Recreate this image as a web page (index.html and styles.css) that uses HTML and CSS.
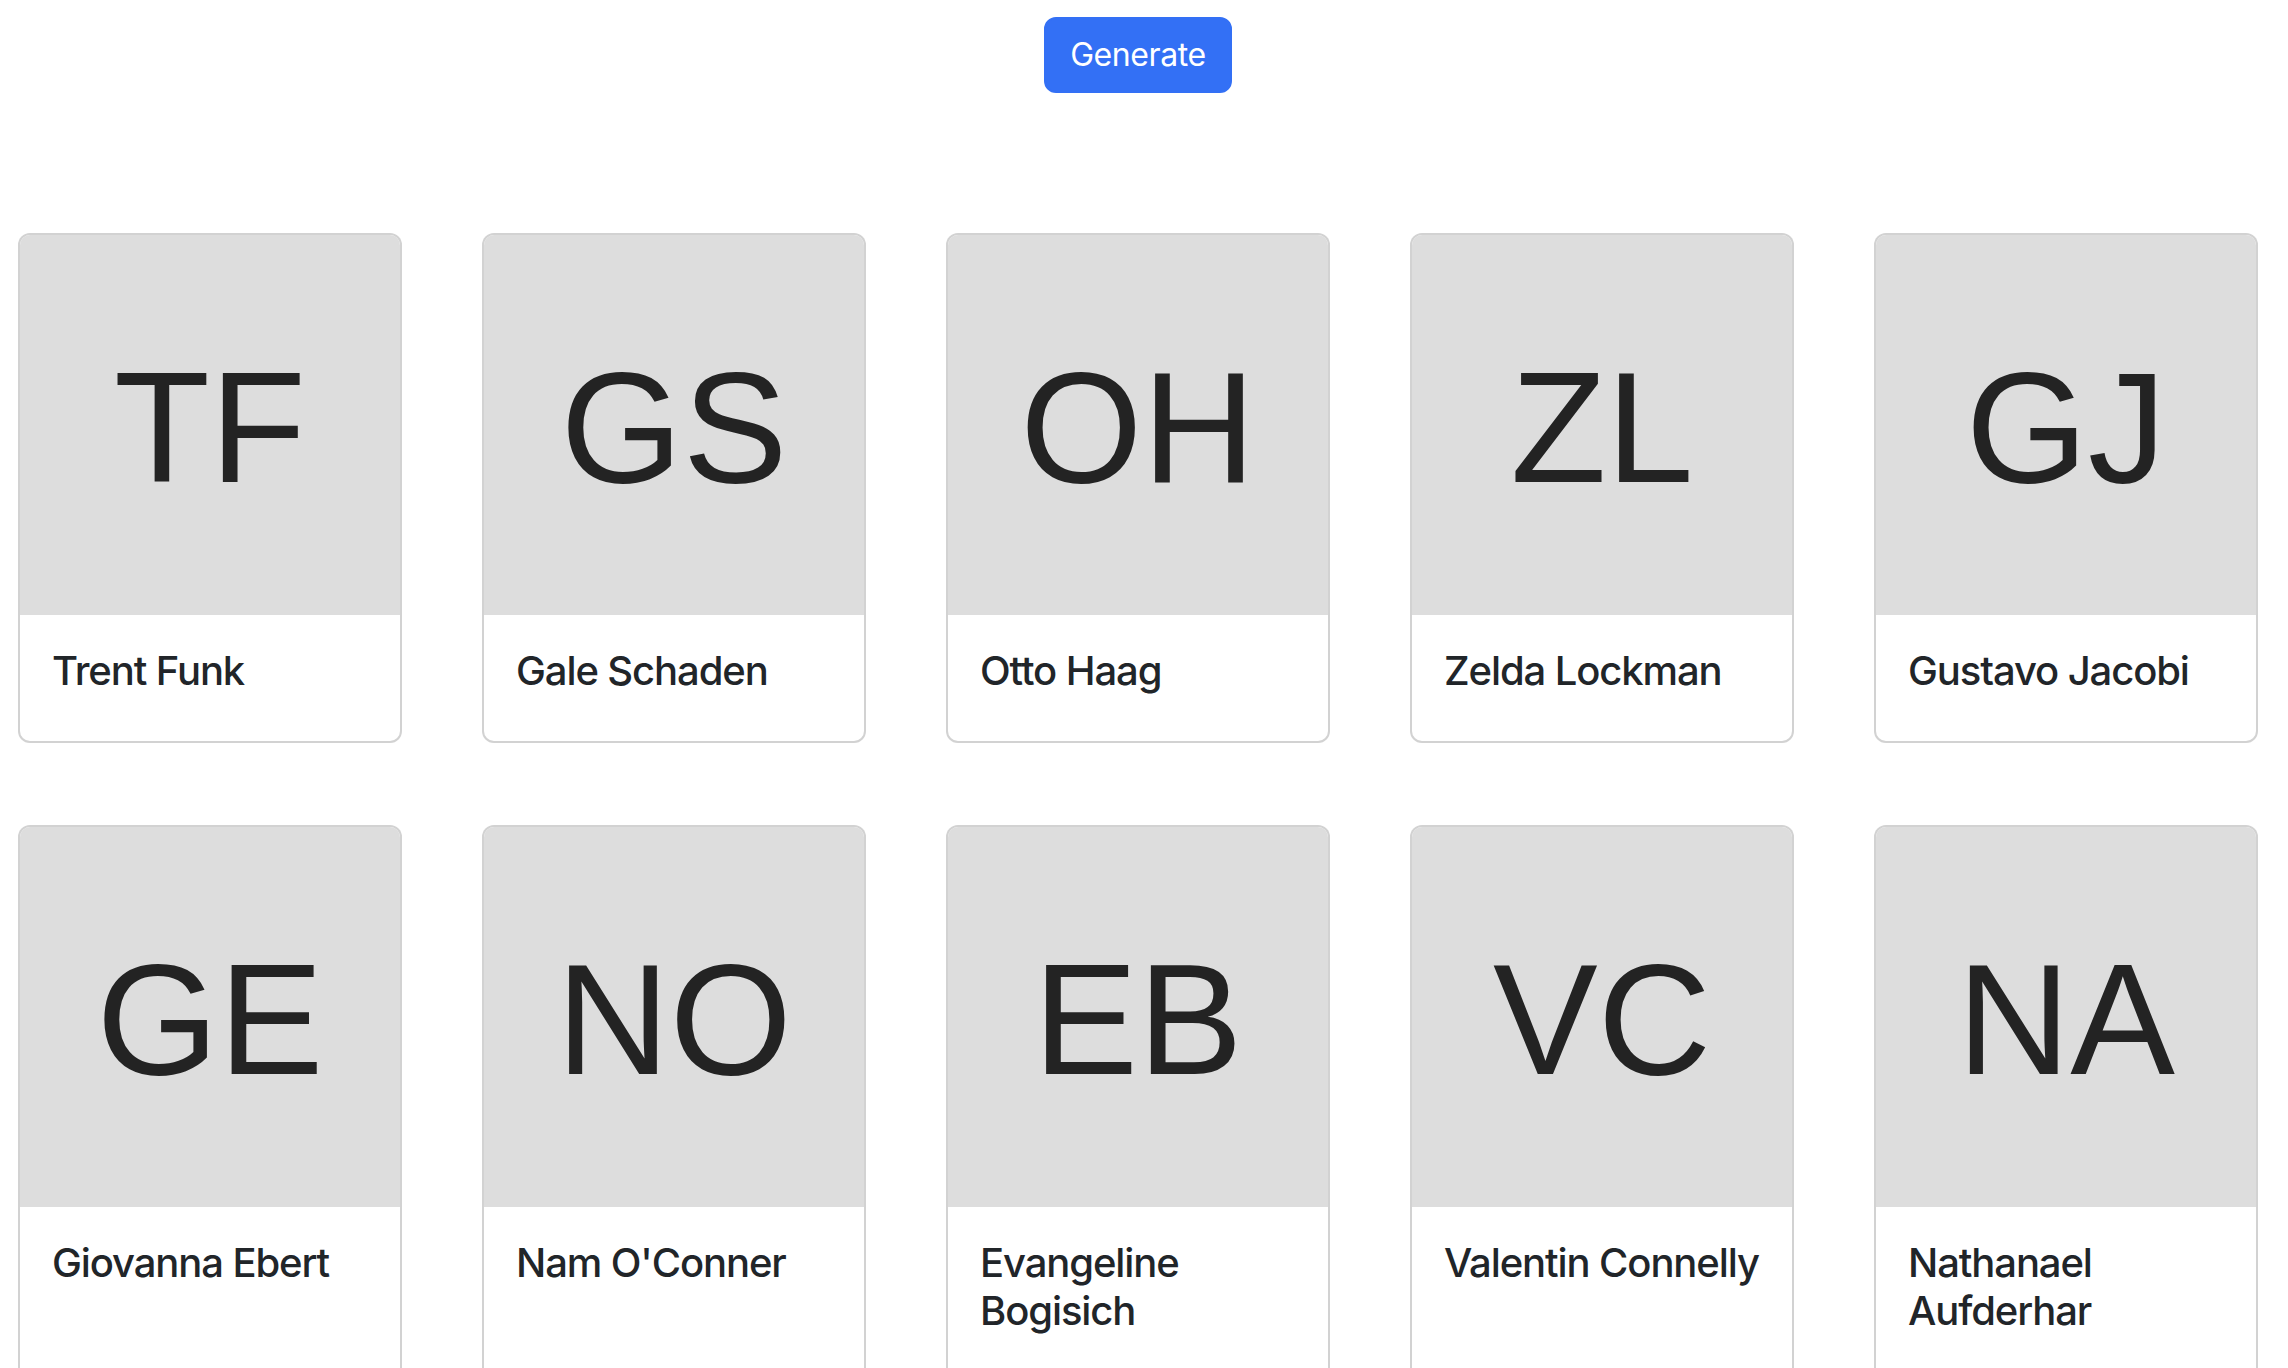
FILE: index.html
```html
<!DOCTYPE html>
<html lang="en">
<head>
<meta charset="utf-8">
<title>Cards</title>
<link rel="stylesheet" href="styles.css">
</head>
<body>
<div class="page">
  <header class="toolbar">
    <button class="btn" type="button">Generate</button>
  </header>
  <main class="grid">
    <div class="card"><div class="thumb">TF</div><div class="card-body"><h5 class="card-title">Trent Funk</h5></div></div>
    <div class="card"><div class="thumb">GS</div><div class="card-body"><h5 class="card-title">Gale Schaden</h5></div></div>
    <div class="card"><div class="thumb">OH</div><div class="card-body"><h5 class="card-title">Otto Haag</h5></div></div>
    <div class="card"><div class="thumb">ZL</div><div class="card-body"><h5 class="card-title">Zelda Lockman</h5></div></div>
    <div class="card"><div class="thumb">GJ</div><div class="card-body"><h5 class="card-title">Gustavo Jacobi</h5></div></div>
    <div class="card"><div class="thumb">GE</div><div class="card-body"><h5 class="card-title">Giovanna Ebert</h5></div></div>
    <div class="card"><div class="thumb">NO</div><div class="card-body"><h5 class="card-title">Nam O'Conner</h5></div></div>
    <div class="card"><div class="thumb">EB</div><div class="card-body"><h5 class="card-title">Evangeline Bogisich</h5></div></div>
    <div class="card"><div class="thumb">VC</div><div class="card-body"><h5 class="card-title">Valentin Connelly</h5></div></div>
    <div class="card"><div class="thumb">NA</div><div class="card-body"><h5 class="card-title">Nathanael Aufderhar</h5></div></div>
  </main>
</div>
</body>
</html>
```

FILE: styles.css
```css
html, body {
  margin: 0;
  padding: 0;
  background: #ffffff;
}

body {
  font-family: Inter, "Noto Sans", "Liberation Sans", sans-serif;
  color: #212529;
}

.page {
  width: 2276px;
}

.toolbar {
  display: flex;
  justify-content: center;
  padding-top: 17px;
}

.btn {
  font-family: Inter, "Noto Sans", sans-serif;
  font-size: 32px;
  font-weight: 400;
  line-height: 48px;
  letter-spacing: -0.4px;
  color: #ffffff;
  background: #3370f5;
  border: 2px solid #3370f5;
  border-radius: 12px;
  padding: 12px 24px;
  cursor: pointer;
}

.grid {
  display: grid;
  grid-template-columns: repeat(5, 384px);
  column-gap: 80px;
  row-gap: 82px;
  justify-content: center;
  margin-top: 140px;
}

.card {
  display: flex;
  flex-direction: column;
  background: #ffffff;
  border: 2px solid rgba(0, 0, 0, 0.175);
  border-radius: 12px;
  overflow: hidden;
}

.thumb {
  height: 380px;
  background: #dddddd;
  display: flex;
  align-items: center;
  justify-content: center;
  font-family: "Liberation Sans", Arial, sans-serif;
  font-size: 157px;
  line-height: 1;
  color: #232323;
  padding-top: 4px;
  box-sizing: border-box;
}

.card-body {
  padding: 32px;
}

.card-title {
  margin: 0 0 14px;
  font-size: 40px;
  font-weight: 500;
  line-height: 1.2;
  letter-spacing: -1.1px;
  color: #212529;
}
```
